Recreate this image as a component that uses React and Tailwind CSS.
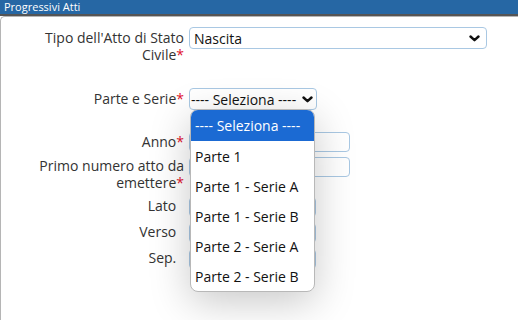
import React from 'react'

function Chevron() {
  return (
    <svg className="w-[11px] h-[7px] shrink-0" viewBox="0 0 11 7" fill="none">
      <path d="M1.5 1.5 L5.5 5.2 L9.5 1.5" stroke="#111" strokeWidth="2.4" strokeLinecap="round" strokeLinejoin="round" />
    </svg>
  )
}

function Label({ children, required, pad = 'pt-[2px]' }) {
  return (
    <div className={`w-[188px] shrink-0 flex justify-end pr-[5px] ${pad}`}>
      <span className="w-[146px] text-right leading-[17px] text-[#333]">
        {children}
        {required ? <span className="text-[#e0102b]">*</span> : <span className="invisible">*</span>}
      </span>
    </div>
  )
}

const options = ['Parte 1', 'Parte 1 - Serie A', 'Parte 1 - Serie B', 'Parte 2 - Serie A', 'Parte 2 - Serie B']

export default function App() {
  return (
    <div className="w-[518px] h-[320px] overflow-hidden bg-white font-['Open_Sans',sans-serif] text-[14px]">
      <div className="h-[14px] bg-[#2667a4] text-white text-[11px] leading-[14px] pl-[4px]">Progressivi Atti</div>
      <div className="h-[2px] bg-[#555]"></div>
      <div className="h-[304px] border-l border-t border-[#b5b5b5] rounded-tl-[5px] pt-[10px]">
        {/* Tipo */}
        <div className="flex items-start">
          <Label required>Tipo dell'Atto di Stato Civile</Label>
          <div className="w-[298px] h-[22px] border border-[#a9c8e3] rounded-[4px] flex items-center justify-between pl-[4px] pr-[6px] text-[#111]">
            <span>Nascita</span>
            <Chevron />
          </div>
        </div>

        {/* Parte e Serie */}
        <div className="flex items-start mt-[25px]">
          <Label required>Parte e Serie</Label>
          <div className="relative">
            <div className="w-[128px] h-[22px] border border-[#a9c8e3] rounded-[4px] flex items-center justify-between pl-[1px] pr-[3px] text-[#111]">
              <span>---- Seleziona ----</span>
              <Chevron />
            </div>
            <div className="absolute z-10 left-[1px] top-[21px] w-[125px] bg-white rounded-[8px] border border-[#b8b8b8] overflow-hidden shadow-[0_10px_40px_rgba(0,0,0,0.22)]">
              <div className="h-[31px] bg-[#1b6ad3] text-white pl-[4px] flex items-center">---- Seleziona ----</div>
              {options.map((o) => (
                <div key={o} className="h-[30px] pl-[4px] flex items-center text-[#111]">{o}</div>
              ))}
            </div>
          </div>
        </div>

        {/* Anno */}
        <div className="flex items-start mt-[22px]">
          <Label required pad="pt-[1px]">Anno</Label>
          <div className="w-[161px] h-[20px] border border-[#a9c8e3] rounded-[4px]"></div>
        </div>

        {/* Primo numero */}
        <div className="flex items-start mt-[5px]">
          <Label required pad="pt-0">Primo numero atto da emettere</Label>
          <div className="w-[161px] h-[20px] border border-[#a9c8e3] rounded-[4px]"></div>
        </div>

        {['Lato', 'Verso', 'Sep.'].map((l) => (
          <div key={l} className="flex items-start mt-[6px]">
            <Label pad="pt-0">{l}</Label>
            <div className="w-[127px] h-[20px] border border-[#a9c8e3] rounded-[4px]"></div>
          </div>
        ))}
      </div>
    </div>
  )
}
